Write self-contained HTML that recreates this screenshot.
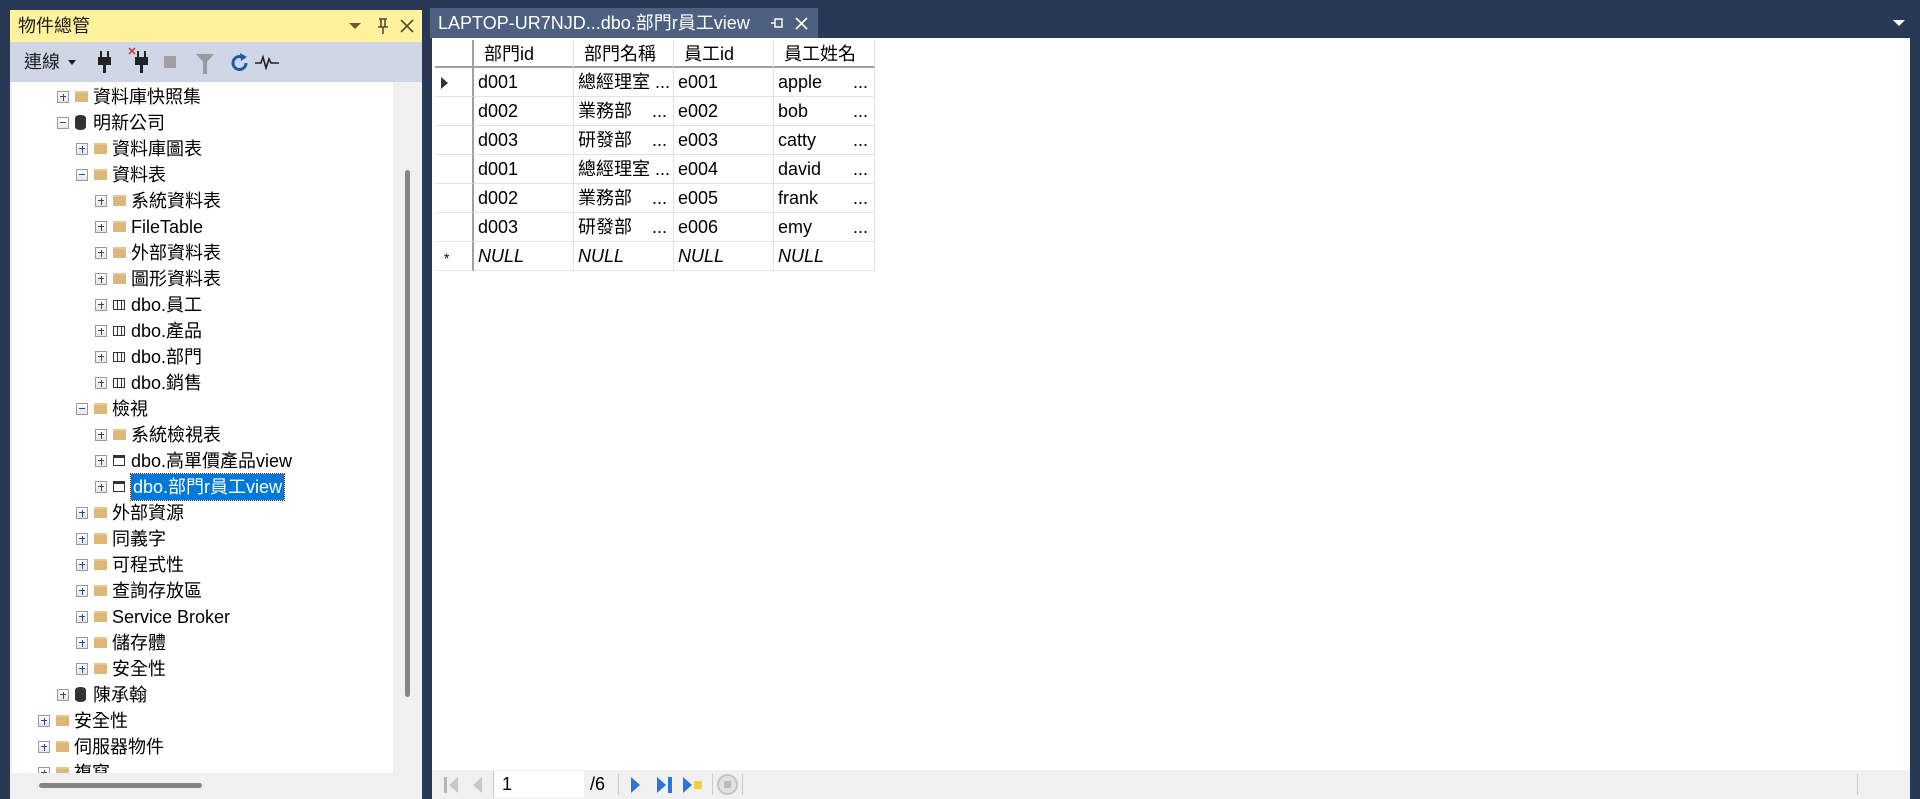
<!DOCTYPE html>
<html><head><meta charset="utf-8"><style>
*{margin:0;padding:0;box-sizing:border-box}
body{width:1920px;height:799px;background:#293955;position:relative;overflow:hidden;font-family:"Liberation Sans","Noto Sans CJK TC",sans-serif;color:#000}
.abs{position:absolute}
#left{left:10px;top:10px;width:412px;height:789px;background:#f0f0f0}
#title{left:0;top:0;width:412px;height:32px;background:#fff29d;font-size:18px;line-height:32px;padding-left:8px;color:#1e1e1e}
#tb{left:0;top:32px;width:412px;height:40px;background:#cfd6e5;font-size:18px;line-height:40px}
#tree{left:2px;top:72px;width:381px;height:691px;background:#fff;overflow:hidden}
.row{position:absolute;height:26px;font-size:18px;line-height:26px;white-space:nowrap}
.box{position:absolute;top:7px;width:12px;height:12px;border:1px solid #9a9a9a;background:linear-gradient(#fff,#e6e6e6)}
.box:before{content:"";position:absolute;left:2px;top:4px;width:6px;height:1px;background:#2a4a8a}
.box.p:after{content:"";position:absolute;left:4.5px;top:1.5px;width:1px;height:7px;background:#2a4a8a}
.fold{position:absolute;top:7px;width:13px;height:11px;background:#dcb67a;border-top:2px solid #e6c98f}
.db{position:absolute;top:5px;width:11px;height:15px;background:#333;border-radius:5px/3px}
.tbl{position:absolute;top:8px;width:12px;height:10px;border:1px solid #333;background:repeating-linear-gradient(90deg,#fff 0 3px,#333 3px 4px)}
.view{position:absolute;top:7px;width:12px;height:11px;border:1px solid #333;border-top:3px solid #333;background:#fff}
.lbl{position:absolute;top:0}
.sel{background:#0078d7;color:#fff;outline:1px dotted #333;padding:0 2px}
#grid{left:435px;top:40px}
.gc{position:absolute;height:29px;border-right:1px solid #e3e3e3;border-bottom:1px solid #e3e3e3;font-size:18px;line-height:29px;padding-left:4px;white-space:nowrap;overflow:hidden}
</style></head><body>
<div id="left" class="abs">
 <div id="title" class="abs">物件總管
  <span class="abs" style="left:339px;top:13px;border:6px solid transparent;border-top:6px solid #6b5a2a;border-bottom:0"></span>
  <svg class="abs" style="left:367px;top:8px" width="12" height="17"><path d="M2 1h8M4 1v8M8 1v8M1 9h10M6 9v7" stroke="#5a4a2a" stroke-width="1.6" fill="none"/></svg>
  <svg class="abs" style="left:390px;top:9px" width="14" height="14"><path d="M1 1l12 12M13 1L1 13" stroke="#5a4a2a" stroke-width="1.6"/></svg>
 </div>
 <div id="tb" class="abs">
  <span class="abs" style="left:14px;color:#1e1e1e">連線</span>
  <span class="abs" style="left:58px;top:18px;border:4px solid transparent;border-top:5px solid #1e1e1e;border-bottom:0"></span>
  <svg class="abs" style="left:88px;top:9px" width="14" height="22"><rect x="2" y="0" width="2" height="6" fill="#222"/><rect x="9" y="0" width="2" height="6" fill="#222"/><rect x="0" y="6" width="13" height="8" fill="#222"/><rect x="5" y="14" width="3" height="8" fill="#222"/></svg>
  <svg class="abs" style="left:118px;top:5px" width="22" height="26"><path d="M1 1l6 6M7 1l-6 6" stroke="#c33" stroke-width="1.5"/><rect x="9" y="4" width="2" height="6" fill="#222"/><rect x="16" y="4" width="2" height="6" fill="#222"/><rect x="7" y="10" width="13" height="8" fill="#222"/><rect x="12" y="18" width="3" height="8" fill="#222"/></svg>
  <span class="abs" style="left:154px;top:14px;width:12px;height:12px;background:#a0a0a0"></span>
  <svg class="abs" style="left:186px;top:12px" width="18" height="20"><path d="M0 0h18l-7 8v12h-4v-12z" fill="#9a9a9a"/></svg>
  <svg class="abs" style="left:220px;top:10px" width="20" height="22"><path d="M16 11a6.5 6.5 0 1 1-3-5.5" fill="none" stroke="#1e5aa8" stroke-width="3"/><path d="M10 1l7 4-6 4z" fill="#1e5aa8"/></svg>
  <svg class="abs" style="left:245px;top:12px" width="24" height="16"><path d="M0 9h6l2-6 3 11 3-9 2 4h8" fill="none" stroke="#222" stroke-width="1.6"/></svg>
 </div>
 <div id="tree" class="abs">
 </div>
 <div class="abs" style="left:383px;top:72px;width:29px;height:691px;background:#f0f0f0"></div>
 <div class="abs" style="left:395px;top:160px;width:5px;height:527px;background:#858585;border-radius:3px"></div>
 <div class="abs" style="left:29px;top:773px;width:163px;height:5px;background:#858585;border-radius:3px"></div>
</div>
<div class="abs" style="left:430px;top:8px;width:388px;height:30px;background:#4d6082;color:#fff;font-size:18px;line-height:30px;padding-left:8px">LAPTOP-UR7NJD...dbo.部門r員工view
 <svg class="abs" style="left:340px;top:9px" width="14" height="12"><path d="M1 6h4M5 2h7v8h-7z" stroke="#fff" stroke-width="1.4" fill="none"/></svg>
 <svg class="abs" style="left:365px;top:9px" width="13" height="13"><path d="M1 1l11 11M12 1L1 12" stroke="#fff" stroke-width="1.6"/></svg></div>
<span class="abs" style="left:1893px;top:20px;border:6px solid transparent;border-top:6px solid #fff;border-bottom:0"></span>
<div class="abs" style="left:432px;top:38px;width:1478px;height:732px;background:#fff"></div>
<div id="grid" class="abs"></div>
<div class="abs" style="left:432px;top:770px;width:1478px;height:29px;background:#f0f0f0">
 <svg class="abs" style="left:12px;top:6px" width="16" height="18"><rect x="0" y="1" width="3" height="16" fill="#b5b5b5"/><path d="M14 1v16l-9-8z" fill="#c8c8c8"/></svg>
 <svg class="abs" style="left:40px;top:6px" width="12" height="18"><path d="M10 1v16l-9-8z" fill="#c8c8c8"/></svg>
 <div class="abs" style="left:61px;top:1px;width:91px;height:27px;background:#fff;font-size:18px;line-height:27px;padding-left:8px;border-left:1px solid #ccc">1</div>
 <div class="abs" style="left:158px;top:0;font-size:18px;line-height:29px">/6</div>
 <div class="abs" style="left:186px;top:4px;width:1px;height:21px;background:#ccc"></div>
 <svg class="abs" style="left:198px;top:6px" width="12" height="18"><path d="M1 1v16l9-8z" fill="#2e75d6"/></svg>
 <svg class="abs" style="left:224px;top:6px" width="18" height="18"><path d="M1 1v16l9-8z" fill="#2e75d6"/><rect x="12" y="1" width="4" height="16" fill="#2e75d6"/></svg>
 <svg class="abs" style="left:250px;top:6px" width="22" height="18"><path d="M1 1v16l9-8z" fill="#2e75d6"/><rect x="12" y="5" width="8" height="8" fill="#f2c811" opacity=".8"/></svg>
 <div class="abs" style="left:280px;top:4px;width:1px;height:21px;background:#ccc"></div>
 <div class="abs" style="left:285px;top:4px;width:21px;height:21px;border-radius:50%;border:2px solid #c4c4c4;background:#e2e2e2"><div style="margin:5px;width:7px;height:7px;background:#bbb"></div></div>
 <div class="abs" style="left:310px;top:4px;width:1px;height:21px;background:#ccc"></div>
 <div class="abs" style="left:1425px;top:4px;width:1px;height:21px;background:#ccc"></div>
</div>
<script>
var rows=[[2,'p','fold','資料庫快照集'],[2,'m','db','明新公司'],[3,'p','fold','資料庫圖表'],[3,'m','fold','資料表'],[4,'p','fold','系統資料表'],[4,'p','fold','FileTable'],[4,'p','fold','外部資料表'],[4,'p','fold','圖形資料表'],[4,'p','tbl','dbo.員工'],[4,'p','tbl','dbo.產品'],[4,'p','tbl','dbo.部門'],[4,'p','tbl','dbo.銷售'],[3,'m','fold','檢視'],[4,'p','fold','系統檢視表'],[4,'p','view','dbo.高單價產品view'],[4,'p','view','dbo.部門r員工view',1],[3,'p','fold','外部資源'],[3,'p','fold','同義字'],[3,'p','fold','可程式性'],[3,'p','fold','查詢存放區'],[3,'p','fold','Service Broker'],[3,'p','fold','儲存體'],[3,'p','fold','安全性'],[2,'p','db','陳承翰'],[1,'p','fold','安全性'],[1,'p','fold','伺服器物件'],[1,'p','fold','複寫']];
var h='';rows.forEach(function(r,i){var bx=19*r[0]+7;var y=2+26*i;
h+='<div class="row" style="left:0;top:'+y+'px;width:380px"><span class="box '+(r[1]=='p'?'p':'')+'" style="left:'+bx+'px"></span><span class="'+r[2]+'" style="left:'+(bx+18)+'px"></span><span class="lbl '+(r[4]?'sel':'')+'" style="left:'+(bx+36)+'px">'+r[3]+'</span></div>';});
document.getElementById('tree').innerHTML=h;
var cols=[[0,39],[39,100],[139,100],[239,100],[339,101]];
var data=[['部門id','部門名稱','員工id','員工姓名'],['d001','總經理室 ...','e001','apple'],['d002','業務部 &nbsp;&nbsp;&nbsp;...','e002','bob'],['d003','研發部 &nbsp;&nbsp;&nbsp;...','e003','catty'],['d001','總經理室 ...','e004','david'],['d002','業務部 &nbsp;&nbsp;&nbsp;...','e005','frank'],['d003','研發部 &nbsp;&nbsp;&nbsp;...','e006','emy'],['NULL','NULL','NULL','NULL']];
var g='';data.forEach(function(r,i){var y=i==0?0:28+29*(i-1);var hh=i==0?28:29;
var hd='';if(i==1)hd='<span style="position:absolute;left:6px;top:9px;border:6px solid transparent;border-left:7px solid #333;border-right:0"></span>';if(i==7)hd='<span style="position:absolute;left:9px;top:2px;font-size:14px">*</span>';
g+='<div class="gc" style="left:0;top:'+y+'px;width:39px;height:'+hh+'px;border-right:2px solid #a0a0a0'+(i==0?';border-bottom:2px solid #a0a0a0':'')+'">'+hd+'</div>';
for(var c=0;c<4;c++){var t=r[c];var st='';if(i==0)st='padding-left:10px;border-bottom:2px solid #a0a0a0;';if(i==7)st='font-style:italic;';
var ex='';if(c==3&&i>0&&i<7)ex='<span style="position:absolute;right:6px">...</span>';
g+='<div class="gc" style="left:'+cols[c+1][0]+'px;top:'+y+'px;width:'+cols[c+1][1]+'px;height:'+hh+'px;'+st+'">'+t+ex+'</div>';}});
document.getElementById('grid').innerHTML=g;
</script>
</body></html>
